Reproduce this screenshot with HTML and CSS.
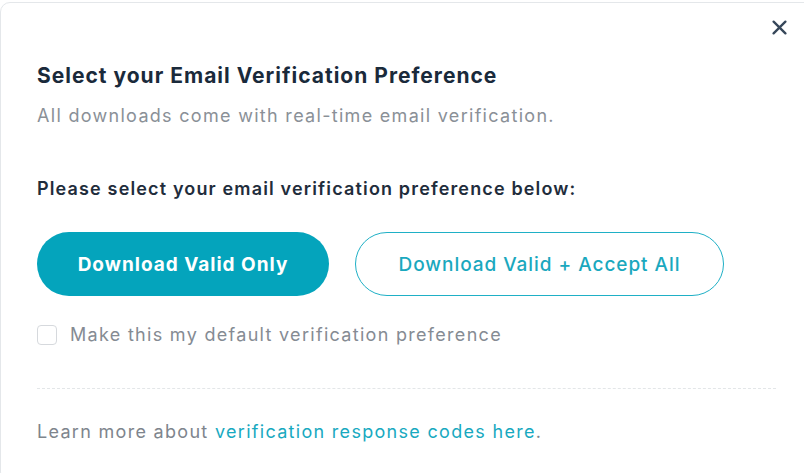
FILE: index.html
```html
<!DOCTYPE html>
<html>
<head>
<meta charset="utf-8">
<link rel="stylesheet" href="styles.css">
</head>
<body>
<div class="modal">
  <button class="close" aria-label="Close">
    <svg width="15" height="15" viewBox="0 0 15 15"><path d="M1.6 1.6L13.4 13.4M13.4 1.6L1.6 13.4" stroke="#36475a" stroke-width="2.3" stroke-linecap="round"/></svg>
  </button>
  <h2 class="title">Select your Email Verification Preference</h2>
  <p class="subtitle">All downloads come with real-time email verification.</p>
  <p class="prompt">Please select your email verification preference below:</p>
  <div class="actions">
    <button class="btn btn-primary">Download Valid Only</button>
    <button class="btn btn-outline">Download Valid + Accept All</button>
  </div>
  <label class="check">
    <span class="box"></span>
    <span class="check-text">Make this my default verification preference</span>
  </label>
  <hr class="divider">
  <p class="footer">Learn more about <a href="#" class="link">verification response codes here</a>.</p>
</div>
</body>
</html>
```
FILE: styles.css
```css
* { box-sizing: border-box; }
html, body { margin: 0; padding: 0; background: #fff; }
body {
  font-family: "Inter", "Liberation Sans", sans-serif;
  width: 804px;
  height: 473px;
  overflow: hidden;
}
.modal {
  position: relative;
  margin-top: 2px;
  width: 820px;
  height: 480px;
  border: 1px solid #e4e7ea;
  border-radius: 10px;
  padding: 60px 0 0 36px;
}
.close {
  position: absolute;
  top: 17px;
  right: 32px;
  width: 15px;
  height: 15px;
  padding: 0;
  border: 0;
  background: none;
  display: flex;
}
.title {
  margin: 0;
  font-size: 21px;
  line-height: 26px;
  font-weight: 700;
  letter-spacing: 1px;
  color: #1a2a3b;
}
.subtitle {
  margin: 15px 0 0;
  font-size: 18px;
  line-height: 24px;
  letter-spacing: 1.3px;
  color: #8a9097;
}
.prompt {
  margin: 49px 0 0;
  font-size: 18px;
  line-height: 24px;
  font-weight: 600;
  letter-spacing: 1.15px;
  color: #1f2d3c;
}
.actions {
  display: flex;
  gap: 26px;
  margin-top: 31px;
}
.btn {
  height: 64px;
  border-radius: 32px;
  font-family: inherit;
  font-size: 19px;
  cursor: pointer;
}
.btn-primary {
  width: 292px;
  background: #04a4bc;
  border: 0;
  color: #fff;
  font-weight: 700;
  letter-spacing: 1px;
}
.btn-outline {
  width: 369px;
  background: #fff;
  border: 1.5px solid #1fb0c6;
  color: #1aa8be;
  font-weight: 500;
  letter-spacing: 0.95px;
}
.check {
  display: flex;
  align-items: center;
  gap: 13px;
  margin-top: 27px;
}
.box {
  width: 20px;
  height: 20px;
  border: 1.5px solid #d6d9dd;
  border-radius: 4px;
}
.check-text {
  font-size: 18px;
  line-height: 24px;
  letter-spacing: 1.3px;
  color: #858b93;
}
.divider {
  width: 739px;
  margin: 41px 0 0;
  border: 0;
  border-top: 1px dashed #e3e6e8;
}
.footer {
  margin: 31px 0 0;
  font-size: 18px;
  line-height: 24px;
  letter-spacing: 1.3px;
  color: #7e858d;
}
.link {
  color: #18a9c0;
  text-decoration: none;
}
```
